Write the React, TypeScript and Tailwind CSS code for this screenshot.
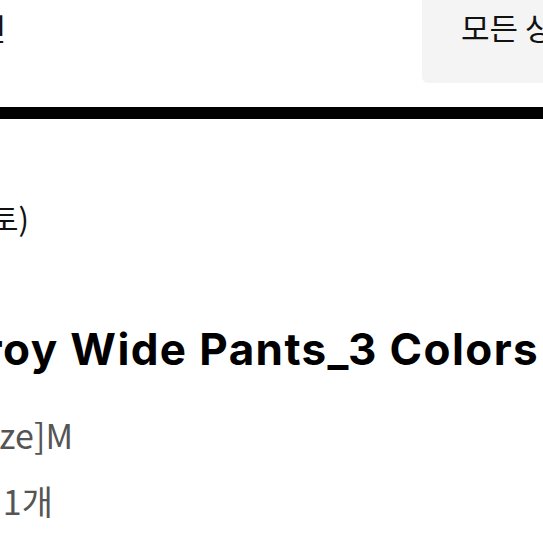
export default function App() {
  return (
    <div className="w-[543px] h-[543px] overflow-hidden bg-white text-[#111] font-['Noto_Sans_CJK_KR',sans-serif]">
      {/* header */}
      <div className="flex h-[83px] items-start">
        <div className="w-[6px] flex justify-end whitespace-nowrap text-[30px] leading-[44px] pt-[5px]">
          주문확인
        </div>
        <div className="flex-1" />
        <div className="w-[121px] h-[83px] bg-[#f4f4f4] rounded-bl-md pl-[39px] pt-[5px] whitespace-nowrap text-[31px] leading-[44px]">
          모든 상품
        </div>
      </div>
      <div className="mt-[24px] h-[12px] bg-black" />

      {/* order item */}
      <div className="mt-[77px] w-[29px] flex justify-end whitespace-nowrap text-[31px] leading-[44px]">
        구매평 작성 (포토)
      </div>
      <div className="mt-[83px] w-[539px] flex justify-end whitespace-nowrap font-['Inter',sans-serif] font-bold text-[44px] leading-[52px] tracking-[1.4px] text-black">
        Corduroy Wide Pants_3 Colors
      </div>
      <div className="mt-[36px] w-[73px] flex justify-end whitespace-nowrap text-[34px] leading-[48px] text-[#555]">
        [Size]M
      </div>
      <div className="mt-[18px] w-[53px] flex justify-end whitespace-nowrap text-[34px] leading-[48px] text-[#555]">
        수량 1개
      </div>
    </div>
  );
}
